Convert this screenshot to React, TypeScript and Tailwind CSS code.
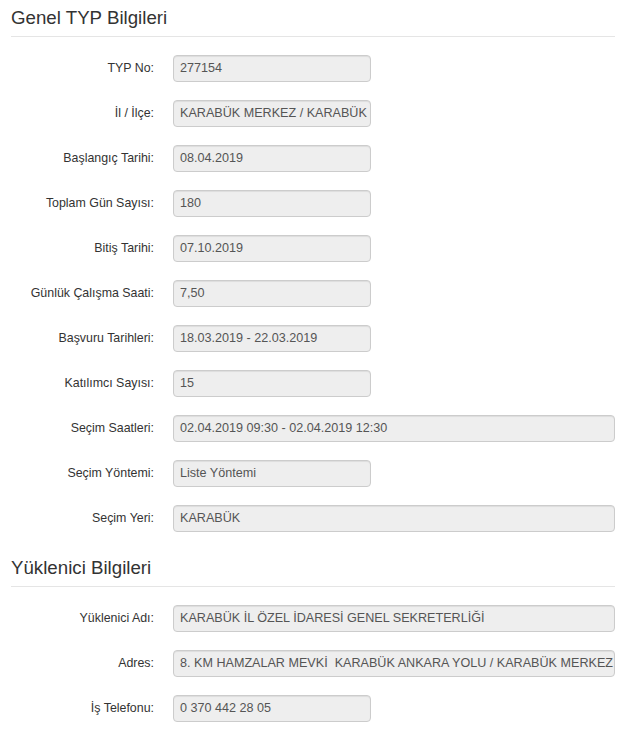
import React from "react";

interface Field {
  label: string;
  value: string;
  wide?: boolean;
}

const genel: Field[] = [
  { label: "TYP No:", value: "277154" },
  { label: "İl / İlçe:", value: "KARABÜK MERKEZ / KARABÜK" },
  { label: "Başlangıç Tarihi:", value: "08.04.2019" },
  { label: "Toplam Gün Sayısı:", value: "180" },
  { label: "Bitiş Tarihi:", value: "07.10.2019" },
  { label: "Günlük Çalışma Saati:", value: "7,50" },
  { label: "Başvuru Tarihleri:", value: "18.03.2019 - 22.03.2019" },
  { label: "Katılımcı Sayısı:", value: "15" },
  { label: "Seçim Saatleri:", value: "02.04.2019 09:30 - 02.04.2019 12:30", wide: true },
  { label: "Seçim Yöntemi:", value: "Liste Yöntemi" },
  { label: "Seçim Yeri:", value: "KARABÜK", wide: true },
];

const yuklenici: Field[] = [
  { label: "Yüklenici Adı:", value: "KARABÜK İL ÖZEL İDARESİ GENEL SEKRETERLİĞİ", wide: true },
  { label: "Adres:", value: "8. KM HAMZALAR MEVKİ  KARABÜK ANKARA YOLU / KARABÜK MERKEZ / KARABÜK", wide: true },
  { label: "İş Telefonu:", value: "0 370 442 28 05" },
];

function SectionTitle({ title }: { title: string }) {
  return (
    <div className="pt-[7px] pb-[8px] border-b border-[#e5e5e5]">
      <h4 className="text-[18.7px] leading-[21px] font-normal text-[#333]">{title}</h4>
    </div>
  );
}

function Row({ field }: { field: Field }) {
  return (
    <div className="flex items-center">
      <label className="w-[143px] shrink-0 text-right text-[12.4px] text-[#333] whitespace-nowrap">{field.label}</label>
      <div
        className={`ml-[19px] h-[27px] flex items-center pl-[6px] bg-[#eeeeee] border border-[#cccccc] rounded-[4px] shadow-[inset_0_1px_1px_rgba(0,0,0,0.075)] text-[12.6px] text-[#555] overflow-hidden whitespace-pre ${
          field.wide ? "flex-1" : "w-[198px]"
        }`}
      >
        {field.value}
      </div>
    </div>
  );
}

export default function App() {
  return (
    <div
      className="bg-white w-[618px] min-h-[748px] pl-[11px] pr-[3px] flex flex-col gap-[18px]"
      style={{ fontFamily: '"Liberation Sans", Arial, sans-serif' }}
    >
      <SectionTitle title="Genel TYP Bilgileri" />
      {genel.map((f) => (
        <Row key={f.label} field={f} />
      ))}
      <SectionTitle title="Yüklenici Bilgileri" />
      {yuklenici.map((f) => (
        <Row key={f.label} field={f} />
      ))}
    </div>
  );
}
